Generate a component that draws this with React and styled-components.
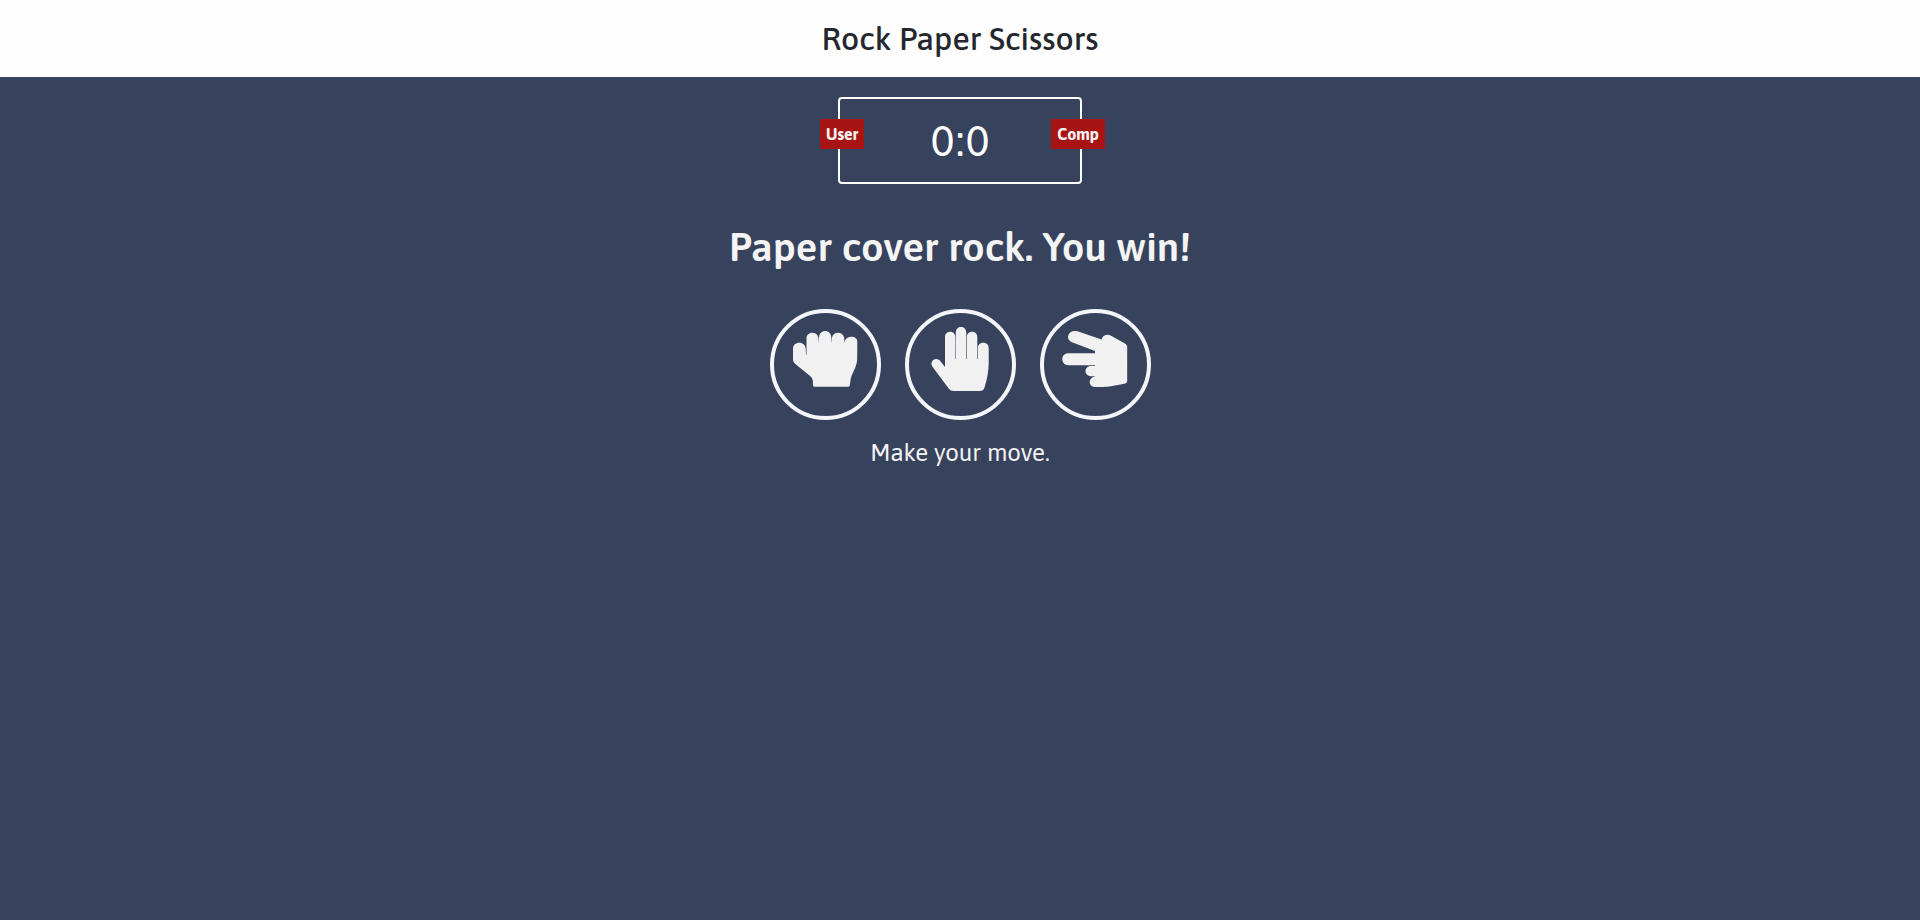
import React from "react";
import styled, { createGlobalStyle } from "styled-components";

const GlobalStyle = createGlobalStyle`
  * {
    box-sizing: border-box;
    margin: 0;
    padding: 0;
  }
  body {
    min-height: 100vh;
    background: #37425d;
    font-family: Asap, Lato, "Open Sans", sans-serif;
  }
`;

const Header = styled.header`
  padding: 20px;
  background: #fefefe;
`;

const Title = styled.h1`
  color: #25272e;
  font-size: 32px;
  font-weight: 500;
  line-height: 37px;
  text-align: center;
`;

const Main = styled.main`
  display: flex;
  flex-direction: column;
  align-items: center;
  padding: 20px;
  color: #f4f4f4;
  text-align: center;
`;

const ScoreBoard = styled.section`
  position: relative;
  width: 244px;
  padding: 16px 20px;
  border: 2px solid #ffffff;
  border-radius: 4px;
  color: #ffffff;
  font-size: 44px;
  line-height: 51px;
`;

const Badge = styled.div`
  position: absolute;
  top: 20px;
  ${({ $side }) => ($side === "left" ? "left: -20px;" : "right: -25px;")}
  padding: 5px 6px;
  background: #a81414;
  color: #f4f4f4;
  font-size: 16px;
  font-weight: 700;
  line-height: 20px;
`;

const Result = styled.h2`
  margin: 38px 0;
  font-size: 40px;
  font-weight: 600;
  line-height: 49px;
`;

const Choices = styled.div`
  display: flex;
  gap: 24px;
`;

const Choice = styled.button`
  display: flex;
  justify-content: center;
  width: 111px;
  height: 111px;
  padding-top: 14px;
  border: 4px solid #f5f6fb;
  border-radius: 50%;
  background: transparent;
  color: #f1f1f1;
  cursor: pointer;
`;

const HandIcon = styled.svg`
  width: 64px;
  height: 64px;
  overflow: visible;
  fill: currentColor;
`;

const Prompt = styled.p`
  margin-top: 19px;
  font-size: 24px;
  line-height: 28px;
`;

const Rock = () => (
  <HandIcon viewBox="0 0 64 64" aria-hidden="true">
    <path d="M0 21.5C0 18 2.800 15.700 6.300 15.700C10 15.700 12.300 18 12.700 21.500L13 28L13.500 27.500V11.500C13.500 8 16 5.800 19.500 5.800C22.500 5.800 24.700 7.500 25.300 10.500L25.700 16.500L26 10C26.500 6.500 28.800 4 32.200 4C35.600 4 37.900 6.500 38.300 10L38.600 16.500L39 10.500C39.600 7.500 42 5.800 45 5.800C48 5.800 50.500 7.700 51.200 10.800L51.500 16.500L52 13.600C53 11 55.300 9.700 58.300 9.700C62 9.700 64.300 11.500 64.300 14.500L64.200 32C64 35.500 63.300 38 62.300 40.500L58.500 49C57.500 51.500 57.500 54 56.900 57.500C56.700 59 56.300 59.700 55.300 59.700H21.500C20.300 59.700 20 59 20 57.500C20 53 19.600 51 16.500 48.500L3.500 38C1 36 0 34.500 0 32Z" />
  </HandIcon>
);

const Paper = () => (
  <HandIcon viewBox="0 0 64 64" aria-hidden="true">
    <path d="M17 40V10C17 6.800 19 4.700 22.200 4.700C25.200 4.700 27.300 6.800 27.300 10V32H27.800V5.500C27.800 2 30 0 33 0C36 0 38.200 2 38.200 5.500V32H38.800V10C38.800 6.800 41 4.700 44 4.700C47.200 4.700 49.300 6.800 49.300 10V32H49.900V21C49.900 17.800 52 15.700 55.300 15.700C58.600 15.700 60.700 17.800 60.700 21V36C60.700 45 58.800 53 56.700 60C55.700 63 54.300 64 51.700 64H25.500C23.500 64 22 63.200 20.700 61.500L4.300 39.500C2.700 37.200 3.300 34.500 5.300 33C7.500 31.400 10.400 31.800 12.200 34Z" />
  </HandIcon>
);

const Scissors = () => (
  <HandIcon viewBox="0 0 64 64" aria-hidden="true">
    <path d="M14.500 4.300L38.500 12.400C39.300 9.600 42 7.500 45 7.800C46.500 7.900 47.500 8.500 49 9.300L61.500 16.300C63.500 17.400 64.200 18.500 64.200 20.500V53.500C64.200 55.500 63.500 56.200 61.500 56.700L48 59.300C45 59.800 43 59.900 40 59.900H31.800C28.600 59.900 26.700 57.800 26.700 55C26.700 52.200 28.700 50.200 31.700 49.800C31.700 49.400 31.300 49.300 30.500 49.300H28C24.800 49.300 22.500 47 22.500 44.100C22.500 41 24.800 38.900 28 38.900H32V38.300H5.400C1.800 38.300 -0.700 35.800 -0.700 32.100C-0.700 28.600 1.800 26.200 5.400 26.200H32V24L9 15.200C6 14 4.500 11.200 5.200 8.500C6.200 5 10 3 14.500 4.300Z" />
  </HandIcon>
);

const moves = [
  { name: "Rock", Icon: Rock },
  { name: "Paper", Icon: Paper },
  { name: "Scissors", Icon: Scissors },
];

export default function App() {
  return (
    <>
      <GlobalStyle />
      <Header>
        <Title>Rock Paper Scissors</Title>
      </Header>
      <Main>
        <ScoreBoard>
          <Badge $side="left">User</Badge>
          <Badge $side="right">Comp</Badge>
          <span>0</span>:<span>0</span>
        </ScoreBoard>
        <Result>Paper cover rock. You win!</Result>
        <Choices>
          {moves.map(({ name, Icon }) => (
            <Choice key={name} type="button" aria-label={name}>
              <Icon />
            </Choice>
          ))}
        </Choices>
        <Prompt>Make your move.</Prompt>
      </Main>
    </>
  );
}
